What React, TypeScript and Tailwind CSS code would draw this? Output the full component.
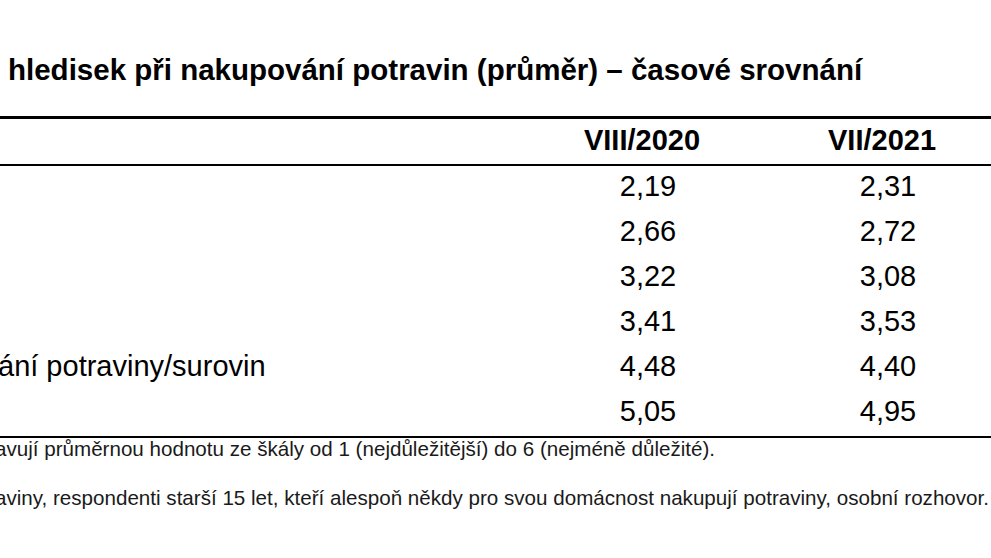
import React from "react";

const rows: { label: string; a: string; b: string }[] = [
  { label: "", a: "2,19", b: "2,31" },
  { label: "", a: "2,66", b: "2,72" },
  { label: "", a: "3,22", b: "3,08" },
  { label: "", a: "3,41", b: "3,53" },
  { label: "ání potraviny/surovin", a: "4,48", b: "4,40" },
  { label: "", a: "5,05", b: "4,95" },
];

export default function App() {
  return (
    <div
      className="w-[991px] h-[558px] overflow-hidden bg-white text-black"
      style={{ fontFamily: '"Liberation Sans", Arial, sans-serif' }}
    >
      <div className="w-[1005px]">
        <div className="pt-[52px] pl-[8px] text-[29.5px] leading-[36px] font-bold whitespace-nowrap">
          hledisek při nakupování potravin (průměr) – časové srovnání
        </div>

        <div className="mt-[28px] border-t-[3px] border-black">
          <div className="grid grid-cols-[525px_240px_240px] h-[47px] text-[29px] leading-[42px] font-bold border-b-2 border-black">
            <div></div>
            <div className="text-center pr-[6px]">VIII/2020</div>
            <div className="text-center pr-[6px]">VII/2021</div>
          </div>
          <div className="border-b-2 border-black">
            {rows.map((r, i) => (
              <div
                key={i}
                className="grid grid-cols-[525px_240px_240px] h-[45px] text-[29px] leading-[40px]"
              >
                <div className="-ml-[2px] whitespace-nowrap">{r.label}</div>
                <div className="text-center pl-[6px]">{r.a}</div>
                <div className="text-center pl-[6px]">{r.b}</div>
              </div>
            ))}
          </div>
        </div>

        <div className="text-[20.6px] leading-[22px] text-[#1a1a1a] whitespace-nowrap -ml-[5px]">
          <div>avují průměrnou hodnotu ze škály od 1 (nejdůležitější) do 6 (nejméně důležité).</div>
          <div className="mt-[27px]">
            aviny, respondenti starší 15 let, kteří alespoň někdy pro svou domácnost nakupují potraviny, osobní rozhovor.
          </div>
        </div>
      </div>
    </div>
  );
}
